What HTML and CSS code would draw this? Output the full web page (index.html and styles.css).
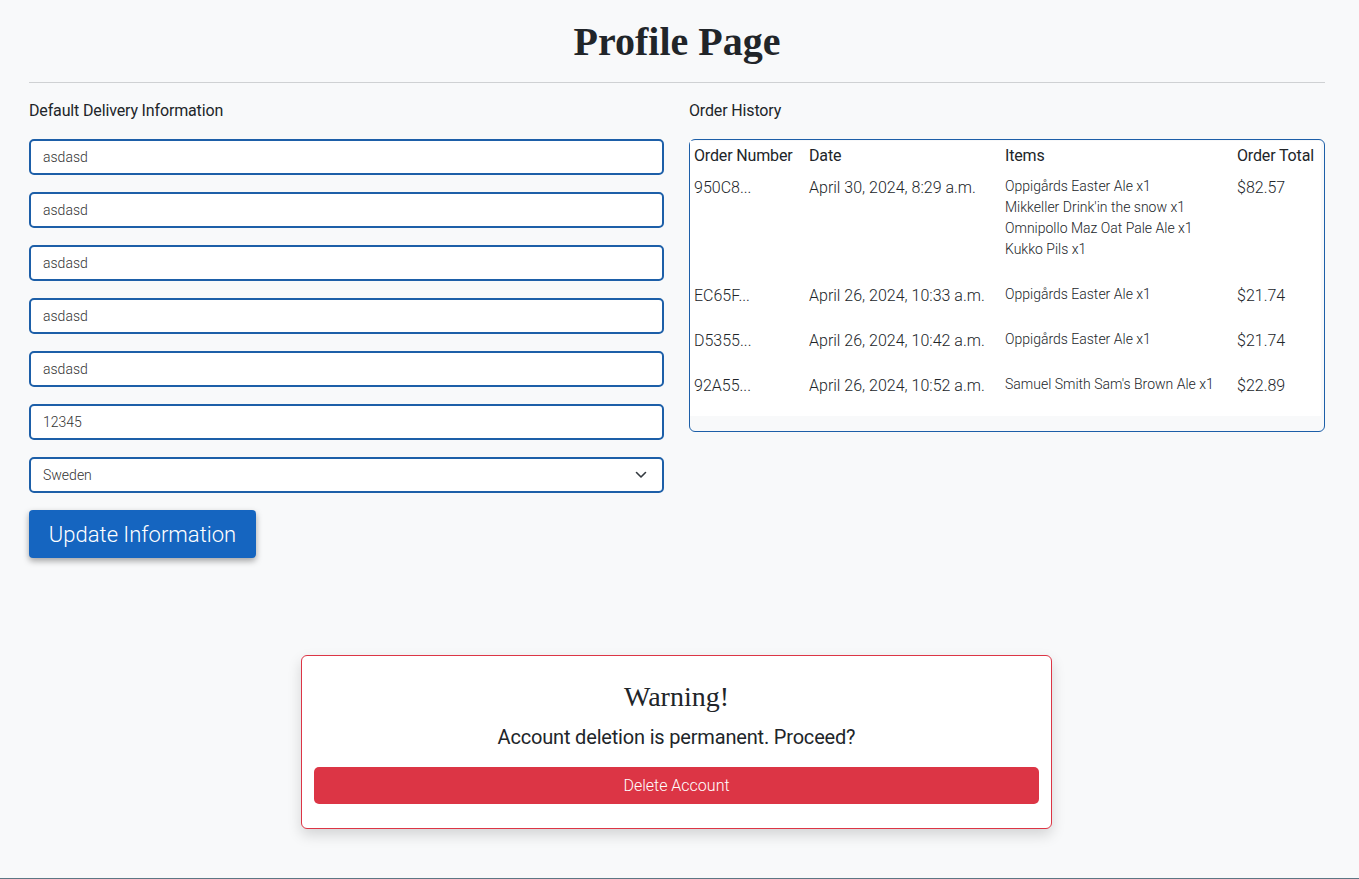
FILE: index.html
```html
<!DOCTYPE html>
<html lang="en">
<head>
<meta charset="utf-8">
<title>Profile Page</title>
<link rel="stylesheet" href="styles.css">
</head>
<body>
<main class="page">
  <h1 class="page-title">Profile Page</h1>
  <hr class="divider">
  <div class="columns">
    <section class="col">
      <p class="section-label">Default Delivery Information</p>
      <form class="delivery-form">
        <input class="field" type="text" value="asdasd">
        <input class="field" type="text" value="asdasd">
        <input class="field" type="text" value="asdasd">
        <input class="field" type="text" value="asdasd">
        <input class="field" type="text" value="asdasd">
        <input class="field" type="text" value="12345">
        <select class="field select">
          <option>Sweden</option>
        </select>
        <button type="button" class="btn-update">Update Information</button>
      </form>
    </section>
    <section class="col">
      <p class="section-label">Order History</p>
      <div class="orders-box">
        <table class="orders">
          <colgroup>
            <col class="c-num"><col class="c-date"><col class="c-items"><col class="c-total">
          </colgroup>
          <thead>
            <tr><th>Order Number</th><th>Date</th><th>Items</th><th>Order Total</th></tr>
          </thead>
          <tbody>
            <tr>
              <td>950C8...</td>
              <td>April 30, 2024, 8:29 a.m.</td>
              <td class="items">
                <div>Oppigårds Easter Ale x1</div>
                <div>Mikkeller Drink'in the snow x1</div>
                <div>Omnipollo Maz Oat Pale Ale x1</div>
                <div>Kukko Pils x1</div>
              </td>
              <td>$82.57</td>
            </tr>
            <tr>
              <td>EC65F...</td>
              <td>April 26, 2024, 10:33 a.m.</td>
              <td class="items"><div>Oppigårds Easter Ale x1</div></td>
              <td>$21.74</td>
            </tr>
            <tr>
              <td>D5355...</td>
              <td>April 26, 2024, 10:42 a.m.</td>
              <td class="items"><div>Oppigårds Easter Ale x1</div></td>
              <td>$21.74</td>
            </tr>
            <tr>
              <td>92A55...</td>
              <td>April 26, 2024, 10:52 a.m.</td>
              <td class="items"><div>Samuel Smith Sam's Brown Ale x1</div></td>
              <td>$22.89</td>
            </tr>
          </tbody>
        </table>
      </div>
    </section>
  </div>
  <div class="warning-card">
    <h3 class="warning-title">Warning!</h3>
    <p class="warning-text">Account deletion is permanent. Proceed?</p>
    <button type="button" class="btn-delete">Delete Account</button>
  </div>
</main>
<footer class="footer"></footer>
</body>
</html>
```

FILE: styles.css
```css
* { box-sizing: border-box; }
html, body { margin: 0; padding: 0; }
body {
  background: #f8f9fa;
  color: #212529;
  font-family: Roboto, "Liberation Sans", sans-serif;
}
.page {
  width: 1296px;
  margin-left: 29px;
  padding-top: 18px;
}
.page-title {
  font-family: "Liberation Serif", serif;
  font-weight: 700;
  font-size: 40px;
  line-height: 48px;
  text-align: center;
  margin: 0 0 16px;
  color: #212529;
}
.divider {
  border: 0;
  border-top: 1px solid #cfd1d3;
  margin: 0;
}
.columns {
  display: grid;
  grid-template-columns: 635px 636px;
  column-gap: 25px;
  padding-top: 18px;
}
.section-label {
  margin: 0 0 19px;
  font-size: 16px;
  line-height: 19px;
  font-weight: 400;
  letter-spacing: -0.15px;
  color: #212529;
}
.delivery-form {
  display: flex;
  flex-direction: column;
  align-items: flex-start;
  gap: 17px;
}
.field {
  width: 100%;
  height: 36px;
  border: 2px solid #1d5fa8;
  border-radius: 5px;
  background: #fff;
  padding: 0 12px;
  font-family: Roboto, "Liberation Sans", sans-serif;
  font-weight: 300;
  font-size: 14px;
  color: #333;
  outline: none;
}
.select {
  appearance: none;
  -webkit-appearance: none;
  background-image: url("data:image/svg+xml,%3Csvg xmlns='http://www.w3.org/2000/svg' width='12' height='8' viewBox='0 0 12 8'%3E%3Cpath d='M1.5 1.5l4.5 4.5 4.5-4.5' fill='none' stroke='%23343a40' stroke-width='1.6' stroke-linecap='round' stroke-linejoin='round'/%3E%3C/svg%3E");
  background-repeat: no-repeat;
  background-position: right 15px center;
  background-size: 12px 8px;
}
.btn-update {
  height: 48px;
  width: 227px;
  border: 0;
  border-radius: 4px;
  background: #1565c0;
  color: #fff;
  font-family: Roboto, "Liberation Sans", sans-serif;
  font-weight: 300;
  font-size: 22px;
  box-shadow: 0 3px 6px rgba(0, 0, 0, 0.35);
  cursor: pointer;
}
.orders-box {
  border: 1px solid #1d5fa8;
  border-radius: 6px;
  background: #f8f9fa;
  padding: 1px 3px 15px 0;
}
.orders {
  width: 100%;
  border-collapse: collapse;
  background: #fff;
  table-layout: fixed;
}
.c-num { width: 115px; }
.c-date { width: 196px; }
.c-items { width: 232px; }
.c-total { width: auto; }
.orders th {
  text-align: left;
  font-weight: 400;
  font-size: 16px;
  line-height: 24px;
  letter-spacing: -0.15px;
  padding: 3px 0 5px 4px;
  color: #212529;
  white-space: nowrap;
}
.orders td {
  vertical-align: top;
  font-weight: 300;
  font-size: 16px;
  line-height: 24px;
  padding: 3px 0 18px 4px;
  color: #212529;
  white-space: nowrap;
}
.orders td.items {
  font-size: 14px;
  line-height: 21px;
  padding-top: 3px;
  padding-bottom: 21px;
}
.warning-card {
  width: 751px;
  margin: 97px 0 0 272px;
  background: #fff;
  border: 1px solid #dc3545;
  border-radius: 6px;
  box-shadow: 0 6px 14px rgba(0, 0, 0, 0.15);
  padding: 24px 12px 24px;
  text-align: center;
}
.warning-title {
  font-family: "Liberation Serif", serif;
  font-weight: 400;
  font-size: 28px;
  line-height: 34px;
  margin: 0 0 11px;
}
.warning-text {
  font-size: 20px;
  line-height: 24px;
  letter-spacing: -0.18px;
  margin: 0 0 18px;
  font-weight: 400;
}
.btn-delete {
  width: 100%;
  height: 37px;
  border: 0;
  border-radius: 5px;
  background: #dc3545;
  color: #fff;
  font-family: Roboto, "Liberation Sans", sans-serif;
  font-weight: 300;
  font-size: 16px;
  cursor: pointer;
}
.footer {
  margin-top: 49px;
  height: 40px;
  background: #5d7784;
}
```
